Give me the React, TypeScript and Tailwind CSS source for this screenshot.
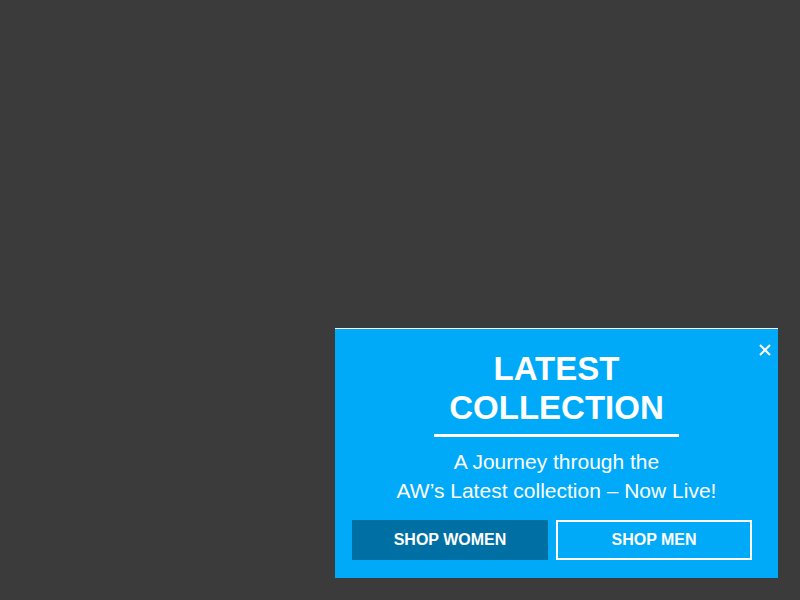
export default function App() {
  return (
    <div className="flex h-[600px] w-[800px] items-end justify-end bg-[#3b3b3b] pb-[22px] pr-[22px] font-['Liberation_Sans',Arial,sans-serif]">
      {/* Promo popup */}
      <div className="relative w-[443px] border-t border-white bg-[#00aaf8] pb-[18px] pt-[20px] text-white">
        <button className="absolute right-[7px] top-[15px] flex h-[12px] w-[12px] items-center justify-center" aria-label="Close">
          <svg width="12" height="12" viewBox="0 0 12 12" fill="none" stroke="white" strokeWidth="2">
            <path d="M1 1 L11 11 M11 1 L1 11" />
          </svg>
        </button>

        <div className="flex flex-col items-center text-center">
          <h2 className="text-[33px] font-bold leading-[1.2]">
            LATEST
            <br />
            COLLECTION
          </h2>
          <div className="mt-[6px] h-[3px] w-[245px] bg-white" />
          <p className="mt-[10px] text-[21px] leading-[29px]">
            A Journey through the
            <br />
            AW’s Latest collection – Now Live!
          </p>
        </div>

        <div className="mt-[15px] grid grid-cols-2 gap-[8px] pl-[17px] pr-[26px]">
          <button className="flex h-[40px] items-center justify-center bg-[#0070a4] text-[16px] font-bold">
            SHOP WOMEN
          </button>
          <button className="flex h-[40px] items-center justify-center border-2 border-white text-[16px] font-bold">
            SHOP MEN
          </button>
        </div>
      </div>
    </div>
  )
}
